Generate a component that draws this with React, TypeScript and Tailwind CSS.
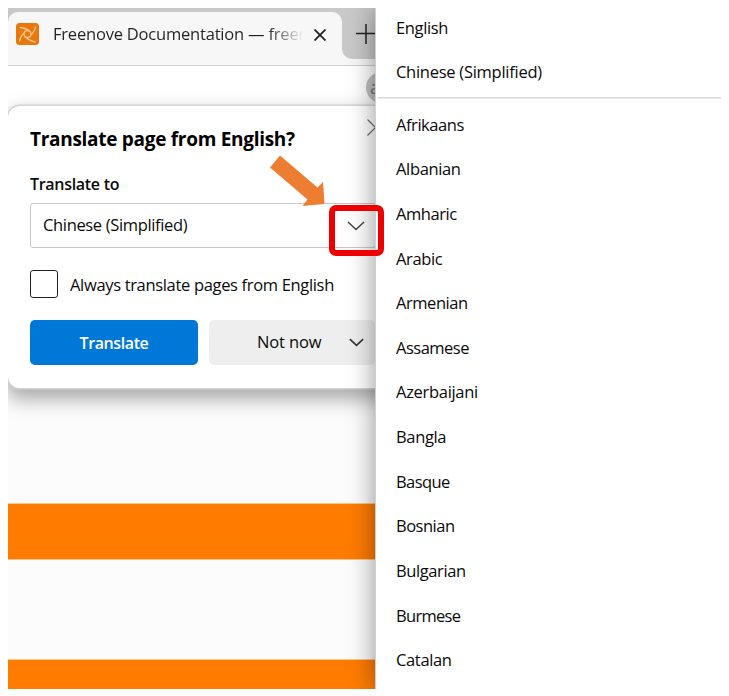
const languages = [
  { name: 'Afrikaans', tracking: 'tracking-[-0.45px]' },
  { name: 'Albanian', tracking: 'tracking-[-0.35px]' },
  { name: 'Amharic', tracking: 'tracking-[-0.45px]' },
  { name: 'Arabic', tracking: 'tracking-[-0.35px]' },
  { name: 'Armenian', tracking: 'tracking-[-0.45px]' },
  { name: 'Assamese', tracking: 'tracking-[-0.5px]' },
  { name: 'Azerbaijani', tracking: 'tracking-[-0.3px]' },
  { name: 'Bangla', tracking: 'tracking-[-0.35px]' },
  { name: 'Basque', tracking: 'tracking-[-0.6px]' },
  { name: 'Bosnian', tracking: 'tracking-[-0.5px]' },
  { name: 'Bulgarian', tracking: 'tracking-[-0.4px]' },
  { name: 'Burmese', tracking: 'tracking-[-0.7px]' },
  { name: 'Catalan', tracking: 'tracking-[-0.35px]' },
];

function Chevron({ className }: { className: string }) {
  return (
    <svg className={className} viewBox="0 0 18 10" fill="none" stroke="currentColor">
      <path d="M1 1 L9 8.5 L17 1" />
    </svg>
  );
}

function TabStrip() {
  return (
    <div className="h-[58px] shrink-0 border-b border-[#cfcfcf] bg-[#f7f7f7]">
      <div className="flex h-[51px]">
        <div className="w-[334px] bg-[#c9c9c9] pt-1">
          <div className="flex h-full items-start rounded-t-[10px] bg-[#f7f7f7] pt-[11px] pl-2">
            <svg className="h-[22px] w-[23px] shrink-0" viewBox="0 0 23 22" fill="none">
              <rect width="23" height="22" rx="3.5" fill="#e8780c" />
              <g stroke="#f9c795" strokeWidth="1.3">
                <circle cx="11.5" cy="11" r="3.4" />
                <path d="M3.5 4.5 Q9 4.5 14 8.5 M19.5 3.5 Q19 8.5 14.8 12 M19.5 19 Q13.5 18 9 13.8 M3.5 18.5 Q4.5 13 8.2 10" />
              </g>
            </svg>
            <div className="ml-[14px] w-[250px] overflow-hidden whitespace-nowrap bg-[linear-gradient(90deg,#222_86%,#2220)] bg-clip-text text-[16.5px] leading-[22px] tracking-[-0.2px] text-transparent">
              Freenove Documentation — freen
            </div>
            <svg className="mt-[6px] ml-[11px] h-[12px] w-[12px]" viewBox="0 0 12 12" stroke="#222" strokeWidth="1.8">
              <path d="M0.5 0.5 L11.5 11.5 M11.5 0.5 L0.5 11.5" />
            </svg>
          </div>
        </div>
        <div className="flex-1 overflow-hidden rounded-bl-[10px] bg-[#c9c9c9] pt-[16px] pl-[14px]">
          <svg className="h-[20px] w-[20px]" viewBox="0 0 20 20" stroke="#222" strokeWidth="1.5">
            <path d="M0 9.5 H20 M10 0 V20" />
          </svg>
        </div>
      </div>
    </div>
  );
}

function TranslatePopup() {
  return (
    <section className="relative h-[282px] w-[400px] shrink-0 rounded-[12px] bg-white px-[22px] pt-[21px] shadow-[0_0_0_1.5px_#d4d4d4,0_9px_20px_2px_rgba(0,0,0,0.34)]">
      <div className="flex">
        <h1 className="w-[337px] text-[19px] leading-[24px] font-bold tracking-[-0.29px] whitespace-nowrap text-black">
          Translate page from English?
        </h1>
        <svg className="-mt-[8px] h-[17px] w-[17px] shrink-0" viewBox="0 0 17 17" stroke="#666" strokeWidth="1.2">
          <path d="M0.5 0.5 L16.5 16.5 M16.5 0.5 L0.5 16.5" />
        </svg>
      </div>
      <h2 className="mt-[22px] text-[16px] leading-[22px] font-semibold tracking-[-0.3px]">Translate to</h2>
      <div className="mt-[8px] flex h-[45px] w-[346px] items-center justify-between rounded-[3px] border border-[#c8c8c8] pr-[10px] pl-[12px]">
        <span className="text-[16.5px] tracking-[-0.35px]">Chinese (Simplified)</span>
        <Chevron className="h-[10px] w-[18px] stroke-[1.5] text-[#444]" />
      </div>
      <label className="mt-[22px] flex h-[28px] items-center">
        <span className="h-[28px] w-[28px] rounded-[3px] border-[1.5px] border-[#222]" />
        <span className="mt-[2px] ml-[12px] text-[16.5px] tracking-[-0.33px]">Always translate pages from English</span>
      </label>
      <div className="mt-[22px] flex h-[45px] gap-[11px]">
        <button className="w-[168px] rounded-[5px] bg-[#0078d7] text-[16px] font-semibold tracking-[-0.4px] text-white">
          Translate
        </button>
        <button className="flex w-[166px] items-center rounded-[5px] bg-[#eeeeee] pl-[48px]">
          <span className="text-[16.5px] tracking-[-0.15px] whitespace-nowrap">Not now</span>
          <Chevron className="ml-auto mr-[11px] h-[9px] w-[15px] stroke-[1.9] text-[#333]" />
        </button>
      </div>
    </section>
  );
}

export default function App() {
  return (
    <main className="relative h-[696px] w-[729px] overflow-hidden bg-white p-2 font-['Open_Sans','Noto_Sans',sans-serif] text-[16.5px] text-[#0a0a0a]">
      <div className="flex h-[681px] w-[713px] overflow-hidden">
        <div className="flex w-[367px] shrink-0 flex-col overflow-hidden bg-[#fcfcfc]">
          <TabStrip />
          <div className="h-[40px] shrink-0 bg-white pt-[6px] pl-[358px]">
            <div className="flex h-[31px] w-[31px] items-center rounded-full bg-[#c2c2c2] pl-[4px] text-[19px] text-[#777]">
              a
            </div>
          </div>
          <TranslatePopup />
          <div className="mt-[115px] h-[57px] shrink-0 border-y border-[#ffc58b] bg-[#ff7c00]" />
          <div className="mt-[99px] h-[31px] shrink-0 border-t border-[#ffc58b] bg-[#ff7c00]" />
        </div>
        <nav className="relative flex-1 border-l border-[#cfcfcf] bg-white shadow-[0_0_26px_0_rgba(0,0,0,0.42)]">
          <div className="h-[89px]">
            <div className="flex h-[41px] items-center pl-[20px] tracking-[-0.35px]">English</div>
            <div className="flex h-[47px] items-center pl-[20px] tracking-[-0.27px]">Chinese (Simplified)</div>
          </div>
          <div className="ml-[2px] h-[2px] border-t border-[#d8d8d8] bg-[#ededed]" />
          <ul className="pt-[3.6px]">
            {languages.map(({ name, tracking }) => (
              <li key={name} className={`flex h-[44.67px] items-center pl-[20px] ${tracking}`}>
                {name}
              </li>
            ))}
          </ul>
        </nav>
      </div>
      <svg className="absolute top-0 left-0 h-[300px] w-[400px]" viewBox="0 0 400 300" fill="none">
        <path d="M280 155.5 L317.5 187.5 L323 182 L324.5 204 L302.5 206 L307.5 199.5 L270 167.5 Z" fill="#ed7d31" />
        <rect x="332" y="208" width="49" height="45" rx="4" stroke="#ee0000" strokeWidth="6" />
      </svg>
    </main>
  );
}
